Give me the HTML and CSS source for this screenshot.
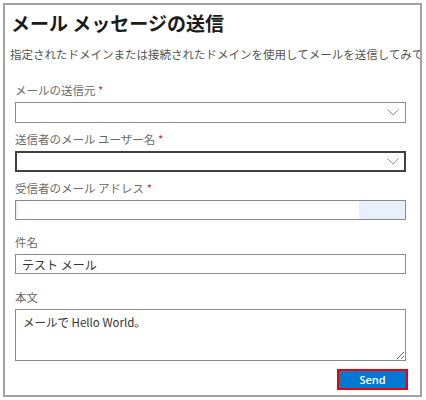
FILE: index.html
```html
<!DOCTYPE html>
<html lang="ja">
<head>
  <meta charset="UTF-8">
  <meta name="viewport" content="width=device-width, initial-scale=1.0">
  <title>メール メッセージの送信</title>
  <link rel="stylesheet" href="styles.css">
</head>
<body>
<div class="mail-panel">
  <h1>メール メッセージの送信</h1>
  <p class="intro">指定されたドメインまたは接続されたドメインを使用してメールを送信してみてください。</p>

  <form class="mail-form">
    <div class="field field-from">
      <label>メールの送信元 <span class="req">*</span></label>
      <div class="select">
        <svg class="chevron" viewBox="0 0 12 7"><path d="M0.5 0.5 L6 6 L11.5 0.5" fill="none" stroke="#8c9bb5" stroke-width="1"/></svg>
      </div>
    </div>

    <div class="field field-user">
      <label>送信者のメール ユーザー名 <span class="req">*</span></label>
      <div class="select select-focus">
        <svg class="chevron" viewBox="0 0 12 7"><path d="M0.5 0.5 L6 6 L11.5 0.5" fill="none" stroke="#8c9bb5" stroke-width="1"/></svg>
      </div>
    </div>

    <div class="field field-to">
      <label>受信者のメール アドレス <span class="req">*</span></label>
      <input type="text" class="text-input autofill">
    </div>

    <div class="field field-subject">
      <label>件名</label>
      <input type="text" class="text-input" value="テスト メール">
    </div>

    <div class="field field-body">
      <label>本文</label>
      <textarea class="text-area">メールで Hello World。</textarea>
    </div>

    <div class="actions">
      <button type="button" class="send-btn">Send</button>
    </div>
  </form>
</div>
</body>
</html>
```

FILE: styles.css
```css
* {
  margin: 0;
  padding: 0;
  box-sizing: border-box;
}

body {
  background: #fff;
  font-family: "Noto Sans CJK JP", "Noto Sans", sans-serif;
}

.mail-panel {
  margin: 3px;
  width: 419px;
  height: 394px;
  border: 2px solid #a3a3a3;
  overflow: hidden;
}

h1 {
  margin: 5px 0 0 6px;
  font-size: 19px;
  line-height: 26px;
  font-weight: 700;
  color: #1b1b1b;
}

.intro {
  margin: 10px 0 0 5px;
  font-size: 11.5px;
  line-height: 16px;
  color: #555;
  white-space: nowrap;
}

.mail-form {
  padding: 0 14px 0 10px;
  margin-top: 20px;
}

.field {
  display: flex;
  flex-direction: column;
  margin-bottom: 8px;
}

.field label {
  font-size: 11.5px;
  line-height: 16px;
  color: #6a6a6a;
  margin-bottom: 4px;
}

.req {
  color: #c4314b;
}

.select {
  height: 21px;
  border: 1px solid #8a8a8a;
  background: #fff;
  position: relative;
}

.select-focus {
  border: 2px solid #404040;
}

.chevron {
  position: absolute;
  right: 6px;
  top: 6px;
  width: 12px;
  height: 7px;
}

.select-focus .chevron {
  right: 5px;
  top: 5px;
}

.text-input {
  height: 20px;
  border: 1px solid #8a8a8a;
  padding: 0 6px;
  font-family: inherit;
  font-size: 12px;
  color: #333;
  outline: none;
}

.autofill {
  background: linear-gradient(to right, #e8f0fe 0 2px, #fff 2px 343px, #e8f0fe 343px);
}

.text-area {
  height: 52px;
  border: 1px solid #8a8a8a;
  padding: 4px 7px;
  font-family: inherit;
  font-size: 11.5px;
  line-height: 16px;
  color: #333;
  outline: none;
}

.field-to {
  margin-bottom: 14px;
}

.field-subject {
  margin-bottom: 15px;
}

.actions {
  display: flex;
  justify-content: flex-end;
  margin-top: 4px;
  margin-right: -2px;
}

.send-btn {
  width: 71px;
  height: 21px;
  background: #0078d4;
  border: 2px solid #ee0000;
  color: #fff;
  font-family: "Open Sans", "Noto Sans", sans-serif;
  font-size: 11px;
  font-weight: 600;
}
```
